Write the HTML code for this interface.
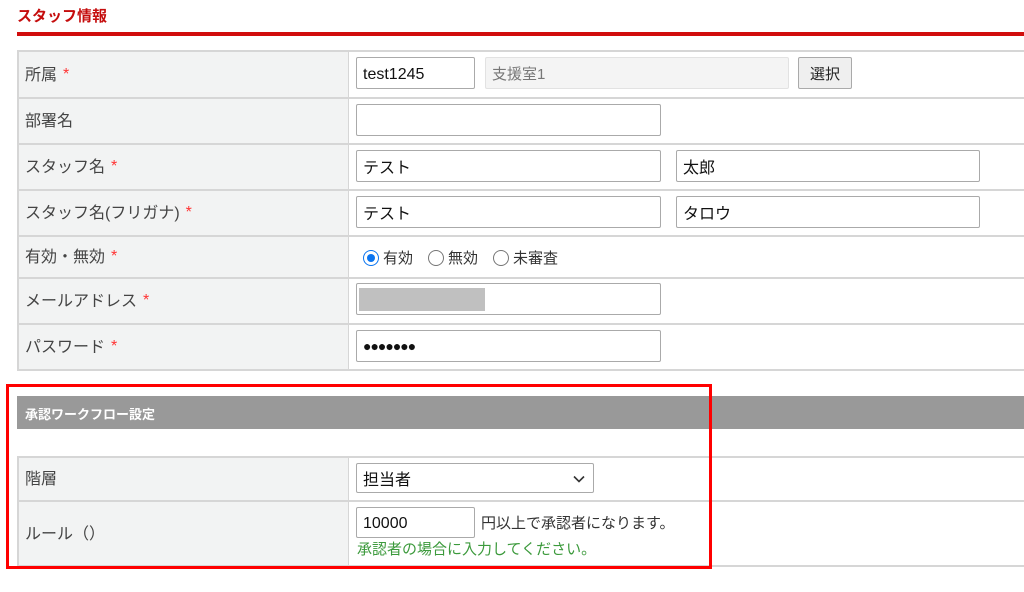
<!DOCTYPE html>
<html><head><meta charset="utf-8"><style>
*{box-sizing:border-box;margin:0;padding:0}
body{width:1024px;height:592px;background:#fff;position:relative;overflow:hidden;font-family:"Liberation Sans","Noto Sans CJK JP",sans-serif;color:#333;font-size:16px}
.a{position:absolute}
.lab{position:absolute;left:17px;width:333px;background:#f2f3f3;border:2px solid #d6d6d6;padding-left:6px;padding-bottom:4px;display:flex;align-items:center;color:#444;font-size:16px}
.val{position:absolute;left:349px;right:-2px;border:2px solid #d6d6d6;border-left:none;background:#fff}
.req{color:#f33;margin-left:6px;line-height:1;position:relative;top:2px}
.in{position:absolute;background:#fff;border:1px solid #aaa;border-radius:2px;padding-left:6px;display:flex;align-items:center;color:#111;font-size:16px}
.lt{padding-top:3px}
.radio{display:inline-block;width:16px;height:16px;border:1px solid #767676;border-radius:50%;vertical-align:-3px;margin-right:4px;background:#fff}
.on{border:1.5px solid #0b75f0;position:relative}
.on:after{content:"";position:absolute;left:2.5px;top:2.5px;width:8px;height:8px;border-radius:50%;background:#0b75f0}
</style></head><body>
<div class="a" style="left:17px;top:5px;color:#c50d0d;font-weight:bold;font-size:15px">スタッフ情報</div>
<div class="a" style="left:17px;top:32px;width:1007px;height:4px;background:#d10d0d"></div>

<div class="lab" style="top:50px;height:49px">所属<span class="req">*</span></div><div class="val" style="top:50px;height:49px"></div>
<div class="lab" style="top:97px;height:48px">部署名</div><div class="val" style="top:97px;height:48px"></div>
<div class="lab" style="top:143px;height:48px">スタッフ名<span class="req">*</span></div><div class="val" style="top:143px;height:48px"></div>
<div class="lab" style="top:189px;height:48px">スタッフ名(フリガナ)<span class="req">*</span></div><div class="val" style="top:189px;height:48px"></div>
<div class="lab" style="top:235px;height:44px;padding-bottom:4px">有効・無効<span class="req">*</span></div><div class="val" style="top:235px;height:44px"></div>
<div class="lab" style="top:277px;height:48px">メールアドレス<span class="req">*</span></div><div class="val" style="top:277px;height:48px"></div>
<div class="lab" style="top:323px;height:48px">パスワード<span class="req">*</span></div><div class="val" style="top:323px;height:48px"></div>

<div class="in lt" style="left:356px;top:57px;width:119px;height:32px">test1245</div>
<div class="in" style="left:485px;top:57px;width:304px;height:32px;background:#f4f4f4;border-color:#e2e2e2;color:#777;font-size:15px">支援室1</div>
<div class="in" style="left:798px;top:57px;width:54px;height:32px;background:#efefef;border-color:#aaa;justify-content:center;padding:0;font-size:15px;color:#222">選択</div>
<div class="in" style="left:356px;top:104px;width:305px;height:32px"></div>
<div class="in" style="left:356px;top:150px;width:305px;height:32px">テスト</div>
<div class="in" style="left:676px;top:150px;width:304px;height:32px">太郎</div>
<div class="in" style="left:356px;top:196px;width:305px;height:32px">テスト</div>
<div class="in" style="left:676px;top:196px;width:304px;height:32px">タロウ</div>
<div class="a" style="left:363px;top:247px;font-size:15px;color:#333"><span class="radio on"></span>有効　<span class="radio"></span>無効　<span class="radio"></span>未審査</div>
<div class="in" style="left:356px;top:283px;width:305px;height:32px;padding:0"><div style="margin-left:2px;width:126px;height:23px;background:#c0c0c0"></div></div>
<div class="in" style="left:356px;top:330px;width:305px;height:32px;font-size:14px;letter-spacing:-1px">●●●●●●●</div>

<div class="a" style="left:17px;top:396px;width:1007px;height:33px;background:#999;color:#fff;font-weight:bold;font-size:13px;padding:8px 0 0 8px">承認ワークフロー設定</div>
<div class="lab" style="top:456px;height:46px">階層</div><div class="val" style="top:456px;height:46px"></div>
<div class="lab" style="top:500px;height:67px">ルール（）</div><div class="val" style="top:500px;height:67px"></div>
<div class="in" style="left:356px;top:463px;width:238px;height:30px">担当者<svg class="a" style="right:8px;top:11px" width="12" height="8" viewBox="0 0 12 8"><path d="M1 1.5l5 5 5-5" stroke="#333" stroke-width="1.6" fill="none"/></svg></div>
<div class="in lt" style="left:356px;top:507px;width:119px;height:31px">10000</div>
<div class="a" style="left:481px;top:512px;font-size:15px">円以上で承認者になります。</div>
<div class="a" style="left:357px;top:538px;font-size:15px;color:#3c9a3c">承認者の場合に入力してください。</div>

<div class="a" style="left:6px;top:384px;width:706px;height:185px;border:3px solid #f00"></div>
</body></html>
